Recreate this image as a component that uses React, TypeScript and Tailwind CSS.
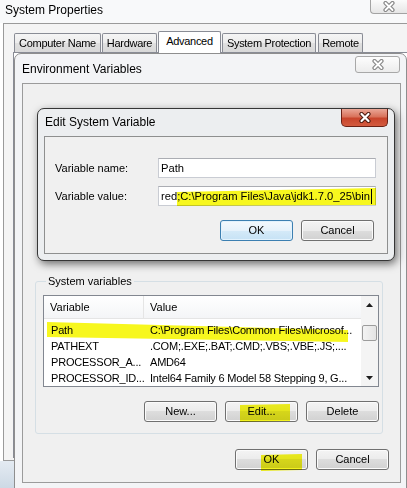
import clsx from "clsx";

const TABS = [
  {label: "Computer Name", width: "w-[87px]", gap: "ml-0", active: false},
  {label: "Hardware", width: "w-[55px]", gap: "ml-px", active: false},
  {label: "Advanced", width: "w-[63px]", gap: "ml-px", active: true},
  {label: "System Protection", width: "w-[94px]", gap: "ml-px", active: false},
  {label: "Remote", width: "w-[45px]", gap: "ml-[2px]", active: false}
];

const SYSTEM_VARS = [
  {name: "Path", value: "C:\\Program Files\\Common Files\\Microsof..."},
  {name: "PATHEXT", value: ".COM;.EXE;.BAT;.CMD;.VBS;.VBE;.JS;...."},
  {name: "PROCESSOR_A...", value: "AMD64"},
  {name: "PROCESSOR_ID...", value: "Intel64 Family 6 Model 58 Stepping 9, G..."}
];

// marker strokes somebody drew over the screenshot
const MARKS = [
  "47,322 348,330 348,342 47,337",
  "177,192 376,188 376,205 177,206",
  "240,405 290,404 290,421 240,422",
  "261,455 302,454 302,470 261,471"
];

function CloseGlyph({red = false}: {red?: boolean}) {
  return (
    <svg width="14" height="11" viewBox="0 0 14 11">
      <path
        d="M3.5 2L10.5 9M10.5 2L3.5 9"
        stroke={red ? "#4a1a10" : "#8a8a8a"}
        strokeWidth="4.2"
        strokeLinecap="round"
        fill="none"
      />
      <path
        d="M3.5 2L10.5 9M10.5 2L3.5 9"
        stroke="#ffffff"
        strokeWidth={red ? "2.2" : "1.8"}
        strokeLinecap="round"
        fill="none"
      />
    </svg>
  );
}

function Arrow({down = false}: {down?: boolean}) {
  return (
    <svg width="7" height="4" viewBox="0 0 7 4">
      <path d={down ? "M0 0H7L3.5 4Z" : "M0 4H7L3.5 0Z"} fill="#1e1e1e" />
    </svg>
  );
}

function WinButton({label, primary = false}: {label: string; primary?: boolean}) {
  return (
    <div
      className={clsx(
        "flex h-[21px] w-[73px] items-center justify-center rounded-[3px] border text-[11px] leading-none text-black",
        primary
          ? "border-[#3c7fb1] bg-[linear-gradient(#f4f9fd,#e6f2fb_50%,#d5eaf8_50%,#c6e2f5)] shadow-[inset_0_0_0_1px_#e2f2fd]"
          : "border-[#707070] bg-[linear-gradient(#f4f4f4,#ebebeb_50%,#dddddd_50%,#d1d1d1)] shadow-[inset_0_0_0_1px_#fbfbfb]"
      )}
    >
      {label}
    </div>
  );
}

function TextBox({children}: {children: React.ReactNode}) {
  return (
    <div className="flex h-[20px] w-[218px] items-center overflow-hidden whitespace-nowrap border border-[#c9ccd3] border-t-[#abadb3] bg-white pl-[2px] text-[11.2px]">
      {children}
    </div>
  );
}

export default function App() {
  return (
    <div className="relative h-[488px] w-[407px] overflow-hidden bg-white font-['Liberation_Sans',Arial,sans-serif] text-black">
      {/* System Properties, behind everything */}
      <div className="flex h-full flex-col">
        <div className="flex h-[23px] items-start justify-between bg-[#f8f9fa]">
          <span className="pl-[5px] pt-[3px] text-[12px] leading-[14px]">System Properties</span>
          <div className="flex h-[14px] w-[37px] items-center justify-center rounded-bl-[4px] border-b border-l border-[#a3a3a3] bg-[linear-gradient(#fbfbfb,#e6e6e6)]">
            <CloseGlyph />
          </div>
        </div>
        <div className="ml-[3px] flex h-[438px] flex-col border-b border-l border-t border-[#9a9a9a] bg-[#f4f4f4]">
          <div className="flex h-[28px] items-end pl-[10px]">
            {TABS.map((tab) => (
              <div
                key={tab.label}
                className={clsx(
                  "flex items-center justify-center rounded-t-[2px] border border-b-0 border-[#898c95] text-[11px] leading-none tracking-[-0.3px]",
                  tab.width,
                  tab.gap,
                  tab.active
                    ? "relative z-10 -mb-px h-[22px] bg-white pb-[2px]"
                    : "h-[19px] bg-[linear-gradient(#f5f5f5,#ececec_50%,#e0e0e0_50%,#d8d8d8)] pt-[1px]"
                )}
              >
                {tab.label}
              </div>
            ))}
          </div>
          <div className="mb-[2px] ml-[9px] flex-1 border-b border-l border-t border-[#898c95] bg-white" />
        </div>
        <div className="flex-1 bg-[linear-gradient(#e4ebf2,#cdd9e5)]" />
      </div>

      {/* Environment Variables */}
      <div className="absolute left-[14px] top-[53px] flex h-[440px] w-[393px] flex-col rounded-t-[7px] border border-[#8e8e8e] bg-[#f3f4f6]">
        <div className="flex h-[29px] items-start justify-between">
          <span className="pl-[7px] pt-[8px] text-[12px] leading-[14px]">Environment Variables</span>
          <div className="mr-[6px] mt-[2px] flex h-[17px] w-[45px] items-center justify-center rounded-[3px] border border-[#a8a8a8] bg-[linear-gradient(#fdfdfd,#ececec)]">
            <CloseGlyph />
          </div>
        </div>
        <div className="ml-[7px] mr-[5px] flex h-[400px] flex-col border border-[#9b9b9b] bg-[#f0f0f0]">
          <div className="h-[190px]" />

          <fieldset className="ml-[12px] w-[348px] rounded-[3px] border border-[#d5dfe5] pb-[11px] pl-[7px] pr-[3px] pt-[7px]">
            <legend className="ml-[3px] px-[2px] text-[11px] leading-[14px]">System variables</legend>
            <div className="flex h-[92px] w-[336px] border border-[#828790] bg-white text-[11px]">
              <div className="flex flex-1 flex-col overflow-hidden">
                <div className="flex h-[23px] border-b border-[#e5e5e5] bg-[linear-gradient(#ffffff,#f4f5f7)]">
                  <div className="flex w-[100px] items-center border-r border-[#e5e5e5] pl-[6px]">Variable</div>
                  <div className="flex items-center pl-[6px]">Value</div>
                </div>
                <div className="pt-[3px]">
                  {SYSTEM_VARS.map((row) => (
                    <div key={row.name} className="flex h-[16px] items-center whitespace-nowrap leading-[16px] tracking-[-0.2px]">
                      <span className="w-[100px] pl-[7px]">{row.name}</span>
                      <span className="pl-[6px]">{row.value}</span>
                    </div>
                  ))}
                </div>
              </div>
              <div className="flex w-[17px] flex-col bg-[#f4f4f4]">
                <div className="flex h-[17px] items-center justify-center">
                  <Arrow />
                </div>
                <div className="flex-1 px-px pt-[12px]">
                  <div className="h-[16px] rounded-[2px] border border-[#9c9c9c] bg-[linear-gradient(90deg,#f3f3f3,#e4e4e4)]" />
                </div>
                <div className="flex h-[17px] items-center justify-center">
                  <Arrow down />
                </div>
              </div>
            </div>
            <div className="mt-[14px] flex justify-end gap-[8px]">
              <WinButton label="New..." />
              <WinButton label="Edit..." />
              <WinButton label="Delete" />
            </div>
          </fieldset>

          <div className="mt-[15px] flex justify-end gap-[8px] pr-[11px]">
            <WinButton label="OK" />
            <WinButton label="Cancel" />
          </div>
        </div>
      </div>

      {/* Edit System Variable */}
      <div className="absolute left-[37px] top-[108px] flex h-[153px] w-[358px] flex-col rounded-[7px] border border-[#363636] bg-[#eceef0] shadow-[2px_3px_8px_rgba(0,0,0,0.55)]">
        <div className="flex h-[27px] items-start justify-between">
          <span className="pl-[7px] pt-[6px] text-[12px] leading-[14px]">Edit System Variable</span>
          <div className="mr-[6px] flex h-[18px] w-[47px] items-center justify-center rounded-b-[5px] border border-t-0 border-[#6b2115] bg-[linear-gradient(#eaa797,#d9735c_45%,#c8452c_55%,#d35b3f)]">
            <CloseGlyph red />
          </div>
        </div>
        <div className="mx-[6px] flex h-[118px] flex-col border border-[#8e8f8f] bg-[#f0f0f0] pt-[21px]">
          <div className="flex items-center">
            <span className="w-[113px] pl-[10px] text-[11px]">Variable name:</span>
            <TextBox>Path</TextBox>
          </div>
          <div className="mt-[8px] flex items-center">
            <span className="w-[113px] pl-[10px] text-[11px]">Variable value:</span>
            <TextBox>
              <span>{"red;C:\\Program Files\\Java\\jdk1.7.0_25\\bin"}</span>
              <span className="ml-px h-[15px] w-px bg-black" />
            </TextBox>
          </div>
          <div className="mt-[14px] flex justify-end gap-[8px] pr-[13px]">
            <WinButton label="OK" primary />
            <WinButton label="Cancel" />
          </div>
        </div>
      </div>

      <svg
        className="pointer-events-none absolute left-0 top-0 mix-blend-multiply"
        width="407"
        height="488"
        viewBox="0 0 407 488"
      >
        {MARKS.map((points) => (
          <polygon key={points} points={points} fill="#f7f71e" />
        ))}
      </svg>
    </div>
  );
}
